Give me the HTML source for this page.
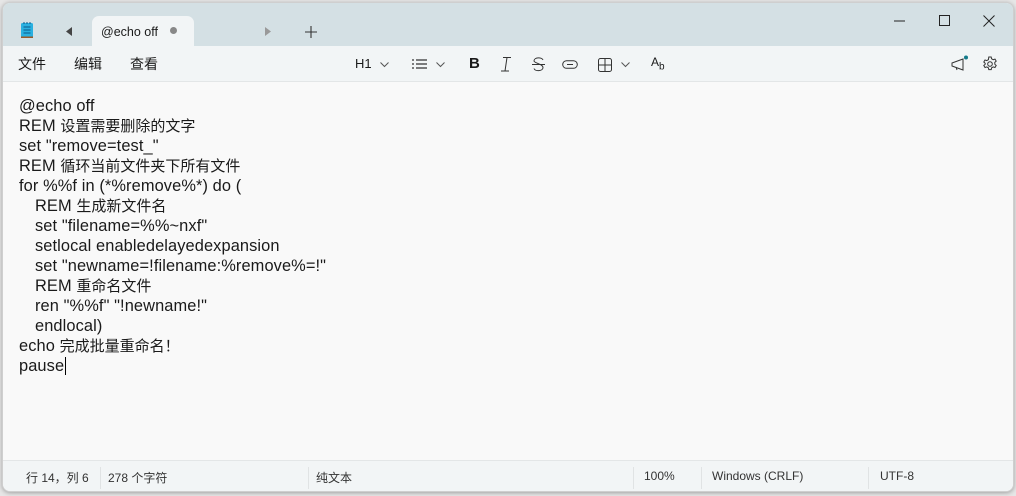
<!DOCTYPE html>
<html><head><meta charset="utf-8"><style>
body{margin:0;width:1016px;height:496px;background:#e6e6e6;font-family:"Liberation Sans","Noto Sans CJK SC",sans-serif;position:relative;overflow:hidden;color:#1a1a1a}
.win{position:absolute;left:2px;top:2px;width:1012px;height:490px;border-radius:8px;background:#f9f9f9;overflow:hidden;box-shadow:0 1px 4px rgba(0,0,0,.3);border:1px solid #cfcfcf;box-sizing:border-box}
.title{position:absolute;left:0;top:0;right:0;height:43px;background:#d4e0e4}
.tab{position:absolute;left:89px;top:13px;width:102px;height:32px;background:#f2f5f6;border-radius:7px 7px 0 0;font-size:12.5px}
.tool{position:absolute;left:0;top:43px;right:0;height:35px;background:#f2f5f6;border-bottom:1px solid #e3e6e7}
.t{position:absolute;font-size:14px}
.ed{position:absolute;left:16px;top:93px;font-size:16.4px;letter-spacing:.1px;white-space:pre;color:#1a1a1a}
.ed div{height:20px;line-height:20px;overflow:visible}
.ed .i{padding-left:16px}
.ed b{font-weight:normal;font-size:15px;letter-spacing:0;line-height:1}
.status{position:absolute;left:0;right:0;top:457px;height:33px;background:#f2f5f6;border-top:1px solid #e3e6e7;font-size:12px;color:#333}
.status span{position:absolute;top:8px}
.sep{position:absolute;top:6px;width:1px;height:22px;background:#e0e3e4}
svg{position:absolute}
</style></head><body>
<div class="win">
<div class="title">
 <svg style="left:17px;top:18px" width="14" height="18" viewBox="0 0 14 18"><rect x="1" y="2" width="12" height="15" rx="1.5" fill="#2ab0e0"/><rect x="1" y="15.5" width="12" height="1.5" fill="#9a5a2a"/><path d="M3.5 6h7M3.5 9h7M3.5 12h7" stroke="#0a5a8a" stroke-width="1"/><path d="M4 1v2M7 1v2M10 1v2" stroke="#0a5a8a" stroke-width="1"/></svg>
 <svg style="left:62px;top:24px" width="8" height="9"><path d="M7 0v9L1 4.5z" fill="#444"/></svg>
 <div class="tab"><span style="position:absolute;left:9px;top:9px">@echo off</span><span style="position:absolute;left:78px;top:11px;width:7px;height:7px;border-radius:50%;background:#888"></span></div>
 <svg style="left:261px;top:24px" width="8" height="9"><path d="M1 0v9l6-4.5z" fill="#999"/></svg>
 <svg style="left:302px;top:23px" width="12" height="12"><path d="M6 0v12M0 6h12" stroke="#333" stroke-width="1.1"/></svg>
 <svg style="left:891px;top:17px" width="12" height="2"><path d="M0 1h11" stroke="#222" stroke-width="1"/></svg>
 <svg style="left:936px;top:12px" width="11" height="11"><rect x=".5" y=".5" width="10" height="10" fill="none" stroke="#222"/></svg>
 <svg style="left:980px;top:12px" width="12" height="12"><path d="M.5 .5l11 11M11.5 .5l-11 11" stroke="#222"/></svg>
</div>
<div class="tool">
 <span class="t" style="left:15px;top:8px">文件</span>
 <span class="t" style="left:71px;top:8px">编辑</span>
 <span class="t" style="left:127px;top:8px">查看</span>
 <span class="t" style="left:352px;top:10px;font-size:13px">H1</span>
 <svg style="left:377px;top:16px" width="9" height="6"><path d="M.5 .5l4 4 4-4" fill="none" stroke="#555"/></svg>
 <svg style="left:409px;top:13px" width="16" height="11"><path d="M0 1h2M0 5h2M0 9h2M4 1h11M4 5h11M4 9h11" stroke="#333" stroke-width="1.2"/></svg>
 <svg style="left:433px;top:16px" width="9" height="6"><path d="M.5 .5l4 4 4-4" fill="none" stroke="#555"/></svg>
 <span class="t" style="left:466px;top:9px;font-weight:bold;font-size:15px">B</span>
 <svg style="left:497px;top:11px" width="12" height="15"><path d="M3 .5h8M1 14h8M7 .5L5 14" stroke="#333" fill="none"/></svg>
 <svg style="left:529px;top:11px" width="13" height="15"><path d="M11 3C10 0 2 0 2 4c0 2 9 3 9 6.5 0 4-8 4-9 1M0 7.5h13" stroke="#333" fill="none"/></svg>
 <svg style="left:559px;top:14px" width="16" height="9"><rect x=".7" y=".7" width="14.6" height="7.6" rx="3.8" fill="none" stroke="#333"/><path d="M5 4.5h6" stroke="#333"/></svg>
 <svg style="left:595px;top:12px" width="14" height="14"><rect x=".5" y=".5" width="13" height="13" rx="2" fill="none" stroke="#333"/><path d="M7 .5v13M.5 7h13" stroke="#333"/></svg>
 <svg style="left:618px;top:16px" width="9" height="6"><path d="M.5 .5l4 4 4-4" fill="none" stroke="#555"/></svg>
 <span class="t" style="left:648px;top:9px;font-size:12px">A<sub style="font-size:10px">b</sub></span>
 <svg style="left:948px;top:9px" width="20" height="18"><path d="M1 8l11-4v11L1 11zM5 12l1 3" fill="none" stroke="#333"/><circle cx="15" cy="2.5" r="2" fill="#137a8a"/></svg>
 <svg style="left:979px;top:10px" width="16" height="16" viewBox="0 0 16 16"><circle cx="8" cy="8" r="2.3" fill="none" stroke="#333"/><path d="M6.8 1h2.4l.4 1.8 1.6.9 1.8-.6 1.2 2-1.4 1.3v1.8l1.4 1.3-1.2 2-1.8-.6-1.6.9-.4 1.8H6.8l-.4-1.8-1.6-.9-1.8.6-1.2-2 1.4-1.3V7.3L1.8 6l1.2-2 1.8.6 1.6-.9z" fill="none" stroke="#333"/></svg>
</div>
<div class="ed"><div>@echo off</div><div>REM <b>设置需要删除的文字</b></div><div>set "remove=test_"</div><div>REM <b>循环当前文件夹下所有文件</b></div><div>for %%f in (*%remove%*) do (</div><div class="i">REM <b>生成新文件名</b></div><div class="i">set "filename=%%~nxf"</div><div class="i">setlocal enabledelayedexpansion</div><div class="i">set "newname=!filename:%remove%=!"</div><div class="i">REM <b>重命名文件</b></div><div class="i">ren "%%f" "!newname!"</div><div class="i">endlocal)</div><div>echo <b>完成批量重命名！</b></div><div>pause<span style="border-left:1px solid #000;margin-left:1px"></span></div></div>
<div class="status">
 <span style="left:23px">行 14，列 6</span><div class="sep" style="left:97px"></div>
 <span style="left:105px">278 个字符</span><div class="sep" style="left:305px"></div>
 <span style="left:313px">纯文本</span><div class="sep" style="left:630px"></div>
 <span style="left:641px">100%</span><div class="sep" style="left:698px"></div>
 <span style="left:709px">Windows (CRLF)</span><div class="sep" style="left:865px"></div>
 <span style="left:877px">UTF-8</span>
</div>
</div>
</body></html>
